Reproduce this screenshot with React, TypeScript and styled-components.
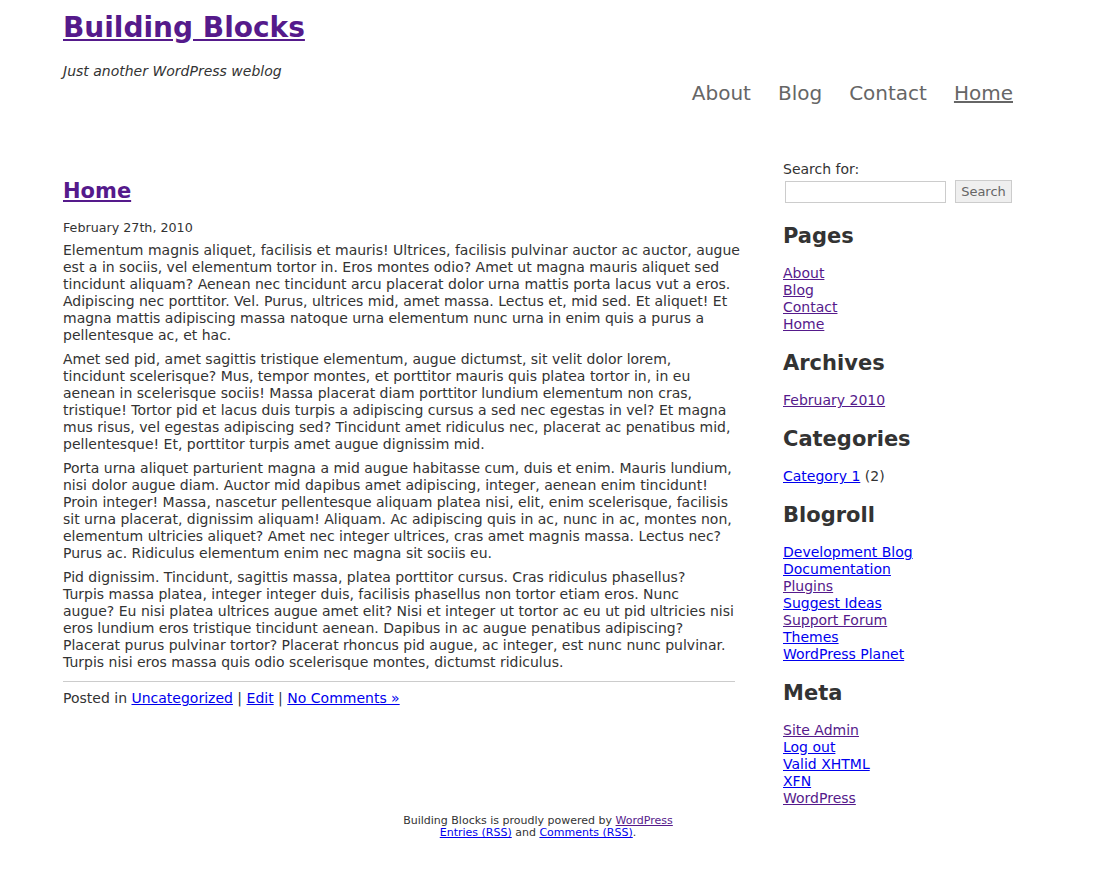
import React from "react";
import styled, { createGlobalStyle } from "styled-components";

const Global = createGlobalStyle`
  html, body { margin: 0; padding: 0; background: #fff; }
  body { font-family: "DejaVu Sans", Verdana, sans-serif; color: #333; font-size: 13px; }
  a { color: #0000ee; }
  a.v { color: #551a8b; }
`;

const Page = styled.div`
  width: 950px;
  margin-left: 63px;
`;

const Header = styled.header`
  display: flex;
  justify-content: space-between;
  align-items: flex-start;
  height: 150px;
`;

const Brand = styled.div`
  padding-top: 10px;
`;

const SiteTitle = styled.h1`
  margin: 0;
  font-size: 28px;
  line-height: 36px;
  font-weight: bold;
  a { color: #551a8b; }
`;

const Tagline = styled.p`
  margin: 17px 0 0;
  font-style: italic;
  font-size: 14px;
  line-height: 17px;
`;

const Nav = styled.nav`
  display: flex;
  gap: 27px;
  margin-top: 81px;
  font-size: 20px;
  line-height: 24px;
`;

const NavLink = styled.a<{ $current?: boolean }>`
  color: #666;
  text-decoration: ${(p) => (p.$current ? "underline" : "none")};
`;

const Body = styled.div`
  display: flex;
  gap: 48px;
`;

const Main = styled.main`
  width: 672px;
  padding-top: 28px;
`;

const PostTitle = styled.h2`
  margin: 0;
  font-size: 21px;
  line-height: 26px;
  font-weight: bold;
  a { color: #551a8b; }
`;

const PostDate = styled.div`
  margin-top: 16px;
  font-size: 12.7px;
  line-height: 16px;
`;

const Entry = styled.div`
  margin-top: 6px;
`;

const Para = styled.p`
  margin: 0 0 7px;
  font-size: 14px;
  line-height: 17px;
`;

const Line = styled.span`
  display: block;
  white-space: nowrap;
`;

const Meta = styled.div`
  border-top: 1px solid #ccc;
  margin-top: 10px;
  padding-top: 8px;
  font-size: 14px;
  line-height: 17px;
`;

const Sidebar = styled.aside`
  width: 230px;
  padding-top: 11px;
  font-size: 14px;
  line-height: 17px;
`;

const SearchForm = styled.form`
  margin: 0;
  padding-bottom: 3px;
`;

const SearchLabel = styled.div`
  margin-bottom: 2px;
`;

const SearchRow = styled.div`
  display: flex;
  align-items: center;
  gap: 9px;
  margin-left: 2px;
`;

const SearchInput = styled.input`
  width: 157px;
  height: 18px;
  border: 1px solid #ccc;
  padding: 1px;
  margin: 0;
`;

const SearchButton = styled.button`
  height: 23px;
  width: 57px;
  padding: 0;
  border: 1px solid #ccc;
  background: #efefef;
  color: #666;
  font-family: "DejaVu Sans", Verdana, sans-serif;
  font-size: 13px;
`;

const WidgetTitle = styled.h2`
  margin: 17px 0 16px;
  font-size: 21px;
  line-height: 26px;
  font-weight: bold;
  color: #333;
`;

const List = styled.ul`
  list-style: none;
  margin: 0;
  padding: 0;
  li { line-height: 17px; }
`;

const Footer = styled.footer`
  width: 950px;
  margin: 8px 0 0 63px;
  text-align: center;
  font-size: 11px;
  line-height: 12px;
  color: #333;
`;

type L = { t: string; v?: boolean };

const Widget = ({ title, items, after }: { title: string; items: L[]; after?: string }) => (
  <>
    <WidgetTitle>{title}</WidgetTitle>
    <List>
      {items.map((i) => (
        <li key={i.t}>
          <a href="#" className={i.v ? "v" : undefined}>{i.t}</a>
          {after ? ` ${after}` : null}
        </li>
      ))}
    </List>
  </>
);

const paragraphs: string[][] = [
  [
    "Elementum magnis aliquet, facilisis et mauris! Ultrices, facilisis pulvinar auctor ac auctor, augue",
    "est a in sociis, vel elementum tortor in. Eros montes odio? Amet ut magna mauris aliquet sed",
    "tincidunt aliquam? Aenean nec tincidunt arcu placerat dolor urna mattis porta lacus vut a eros.",
    "Adipiscing nec porttitor. Vel. Purus, ultrices mid, amet massa. Lectus et, mid sed. Et aliquet! Et",
    "magna mattis adipiscing massa natoque urna elementum nunc urna in enim quis a purus a",
    "pellentesque ac, et hac.",
  ],
  [
    "Amet sed pid, amet sagittis tristique elementum, augue dictumst, sit velit dolor lorem,",
    "tincidunt scelerisque? Mus, tempor montes, et porttitor mauris quis platea tortor in, in eu",
    "aenean in scelerisque sociis! Massa placerat diam porttitor lundium elementum non cras,",
    "tristique! Tortor pid et lacus duis turpis a adipiscing cursus a sed nec egestas in vel? Et magna",
    "mus risus, vel egestas adipiscing sed? Tincidunt amet ridiculus nec, placerat ac penatibus mid,",
    "pellentesque! Et, porttitor turpis amet augue dignissim mid.",
  ],
  [
    "Porta urna aliquet parturient magna a mid augue habitasse cum, duis et enim. Mauris lundium,",
    "nisi dolor augue diam. Auctor mid dapibus amet adipiscing, integer, aenean enim tincidunt!",
    "Proin integer! Massa, nascetur pellentesque aliquam platea nisi, elit, enim scelerisque, facilisis",
    "sit urna placerat, dignissim aliquam! Aliquam. Ac adipiscing quis in ac, nunc in ac, montes non,",
    "elementum ultricies aliquet? Amet nec integer ultrices, cras amet magnis massa. Lectus nec?",
    "Purus ac. Ridiculus elementum enim nec magna sit sociis eu.",
  ],
  [
    "Pid dignissim. Tincidunt, sagittis massa, platea porttitor cursus. Cras ridiculus phasellus?",
    "Turpis massa platea, integer integer duis, facilisis phasellus non tortor etiam eros. Nunc",
    "augue? Eu nisi platea ultrices augue amet elit? Nisi et integer ut tortor ac eu ut pid ultricies nisi",
    "eros lundium eros tristique tincidunt aenean. Dapibus in ac augue penatibus adipiscing?",
    "Placerat purus pulvinar tortor? Placerat rhoncus pid augue, ac integer, est nunc nunc pulvinar.",
    "Turpis nisi eros massa quis odio scelerisque montes, dictumst ridiculus.",
  ],
];

export default function App() {
  return (
    <>
      <Global />
      <Page>
        <Header>
          <Brand>
            <SiteTitle><a href="#">Building Blocks</a></SiteTitle>
            <Tagline>Just another WordPress weblog</Tagline>
          </Brand>
          <Nav>
            <NavLink href="#">About</NavLink>
            <NavLink href="#">Blog</NavLink>
            <NavLink href="#">Contact</NavLink>
            <NavLink href="#" $current>Home</NavLink>
          </Nav>
        </Header>
        <Body>
          <Main>
            <PostTitle><a href="#">Home</a></PostTitle>
            <PostDate>February 27th, 2010</PostDate>
            <Entry>
              {paragraphs.map((lines, i) => (
                <Para key={i}>
                  {lines.map((l, j) => (
                    <Line key={j}>{l}</Line>
                  ))}
                </Para>
              ))}
            </Entry>
            <Meta>
              Posted in <a href="#">Uncategorized</a> | <a href="#">Edit</a> | <a href="#">No Comments »</a>
            </Meta>
          </Main>
          <Sidebar>
            <SearchForm onSubmit={(e) => e.preventDefault()}>
              <SearchLabel>Search for:</SearchLabel>
              <SearchRow>
                <SearchInput type="text" />
                <SearchButton type="submit">Search</SearchButton>
              </SearchRow>
            </SearchForm>
            <Widget title="Pages" items={[{ t: "About", v: true }, { t: "Blog", v: true }, { t: "Contact", v: true }, { t: "Home", v: true }]} />
            <Widget title="Archives" items={[{ t: "February 2010", v: true }]} />
            <Widget title="Categories" items={[{ t: "Category 1" }]} after="(2)" />
            <Widget
              title="Blogroll"
              items={[
                { t: "Development Blog" },
                { t: "Documentation" },
                { t: "Plugins", v: true },
                { t: "Suggest Ideas" },
                { t: "Support Forum", v: true },
                { t: "Themes" },
                { t: "WordPress Planet" },
              ]}
            />
            <Widget
              title="Meta"
              items={[
                { t: "Site Admin", v: true },
                { t: "Log out" },
                { t: "Valid XHTML" },
                { t: "XFN" },
                { t: "WordPress", v: true },
              ]}
            />
          </Sidebar>
        </Body>
      </Page>
      <Footer>
        Building Blocks is proudly powered by <a href="#" className="v">WordPress</a>
        <br />
        <a href="#">Entries (RSS)</a> and <a href="#">Comments (RSS)</a>.
      </Footer>
    </>
  );
}
